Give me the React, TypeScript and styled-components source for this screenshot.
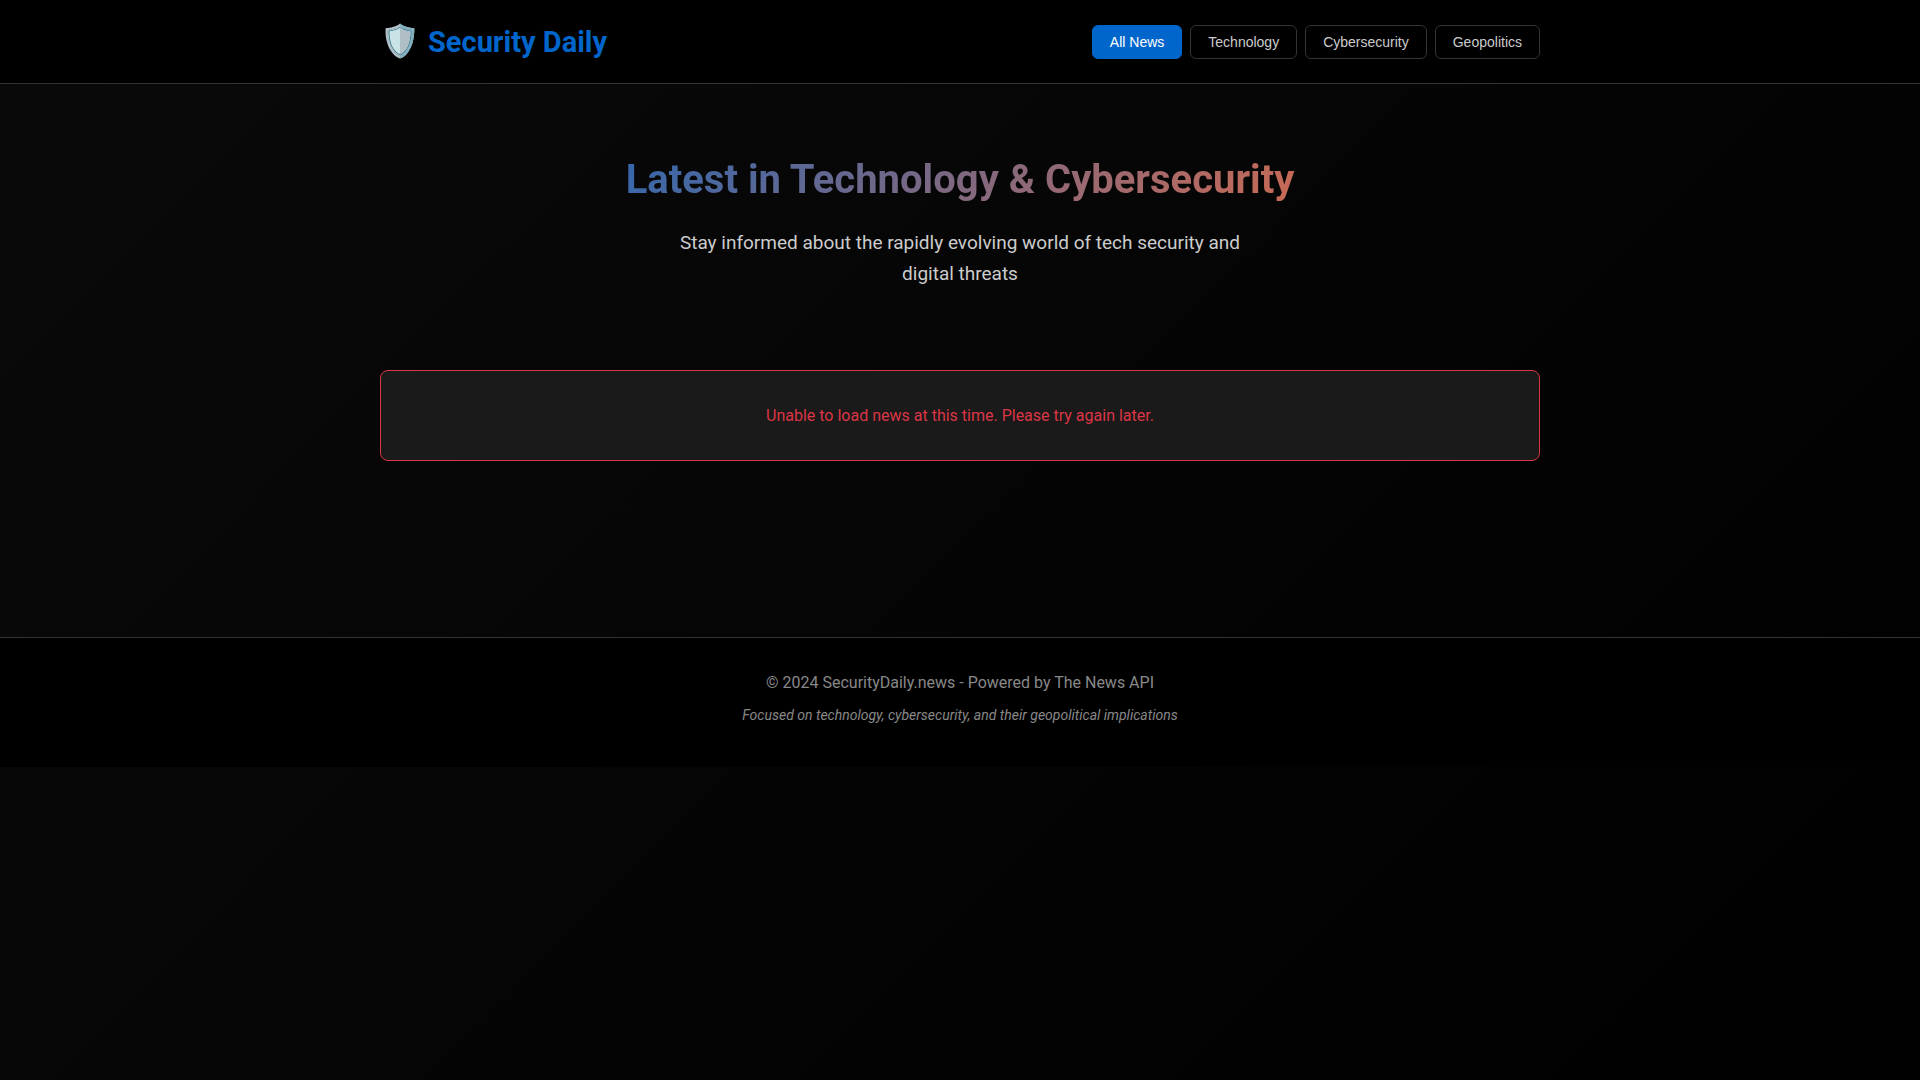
import React, { useState } from "react";
import styled, { createGlobalStyle } from "styled-components";

const GlobalStyle = createGlobalStyle`
  *, *::before, *::after {
    box-sizing: border-box;
    margin: 0;
    padding: 0;
  }

  body {
    min-height: 100vh;
    background: linear-gradient(135deg, #0a0a0a 0%, #000000 100%);
    color: #ffffff;
    font-family: Roboto, "Liberation Sans", sans-serif;
    font-size: 16px;
    line-height: 25px;
  }
`;

const Container = styled.div`
  width: 100%;
  max-width: 1200px;
  margin: 0 auto;
  padding: 0 20px;
`;

const Header = styled.header`
  padding: 16px 0;
  background: #000000;
  border-bottom: 1px solid #333333;
`;

const HeaderRow = styled(Container)`
  display: flex;
  flex-wrap: wrap;
  align-items: center;
  justify-content: space-between;
  gap: 16px;
`;

const Logo = styled.div`
  display: flex;
  align-items: center;
  gap: 8px;
`;

const LogoIcon = styled.span`
  font-size: 32px;
  line-height: 51px;
`;

const LogoText = styled.h1`
  color: #0066cc;
  font-size: 29px;
  font-weight: 700;
  line-height: 46px;
`;

const Nav = styled.nav`
  display: flex;
  flex-wrap: wrap;
  gap: 8px;
`;

const NavButton = styled.button<{ $active: boolean }>`
  padding: 8px 17px;
  border: 1px solid ${({ $active }) => ($active ? "#0066cc" : "#333333")};
  border-radius: 6px;
  background: ${({ $active }) => ($active ? "#0066cc" : "transparent")};
  color: ${({ $active }) => ($active ? "#ffffff" : "#cccccc")};
  font-family: "Liberation Sans", Arial, sans-serif;
  font-size: 14px;
  line-height: 16px;
  cursor: pointer;
`;

const Main = styled.main`
  padding: 32px 0 176px;
`;

const Hero = styled.section`
  display: flex;
  flex-direction: column;
  align-items: center;
  gap: 15px;
  margin-bottom: 49px;
  padding: 32px 0;
  text-align: center;
`;

const HeroTitle = styled.h2`
  align-self: stretch;
  background: linear-gradient(135deg, #0066cc, #ff6b35);
  background-clip: text;
  -webkit-background-clip: text;
  color: transparent;
  font-size: 40px;
  font-weight: 700;
  line-height: 64px;
`;

const HeroText = styled.p`
  max-width: 600px;
  color: #cccccc;
  font-size: 19px;
  line-height: 31px;
`;

const ErrorBox = styled.div`
  padding: 32px;
  border: 1px solid #dc3545;
  border-radius: 8px;
  background: #1a1a1a;
  color: #dc3545;
  text-align: center;
`;

const Footer = styled.footer`
  padding: 32px 0;
  background: #000000;
  border-top: 1px solid #333333;
  color: #888888;
  text-align: center;
`;

const Tagline = styled.p`
  margin: 8px 0;
  font-size: 14px;
  font-style: italic;
  line-height: 24px;
`;

const categories = ["All News", "Technology", "Cybersecurity", "Geopolitics"];

export default function App() {
  const [active, setActive] = useState(categories[0]);

  return (
    <>
      <GlobalStyle />
      <Header>
        <HeaderRow>
          <Logo>
            <LogoIcon aria-hidden="true">🛡️</LogoIcon>
            <LogoText>Security Daily</LogoText>
          </Logo>
          <Nav>
            {categories.map((name) => (
              <NavButton
                key={name}
                type="button"
                $active={name === active}
                onClick={() => setActive(name)}
              >
                {name}
              </NavButton>
            ))}
          </Nav>
        </HeaderRow>
      </Header>
      <Main>
        <Container>
          <Hero>
            <HeroTitle>Latest in Technology &amp; Cybersecurity</HeroTitle>
            <HeroText>
              Stay informed about the rapidly evolving world of tech security and digital threats
            </HeroText>
          </Hero>
          <ErrorBox role="alert">
            <p>Unable to load news at this time. Please try again later.</p>
          </ErrorBox>
        </Container>
      </Main>
      <Footer>
        <Container>
          <p>© 2024 SecurityDaily.news - Powered by The News API</p>
          <Tagline>Focused on technology, cybersecurity, and their geopolitical implications</Tagline>
        </Container>
      </Footer>
    </>
  );
}
